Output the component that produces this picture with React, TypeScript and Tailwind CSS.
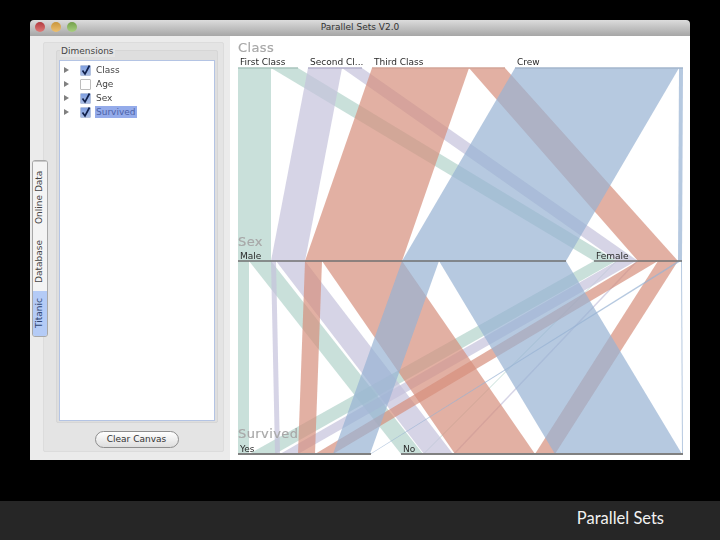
const GREEN = "#b2d3ca";
const PURPLE = "#c4c2db";
const RED = "#d68e7c";
const BLUE = "#97b2d3";

// [top-left, top-right, bottom-left, bottom-right, colour]
type Band = [number, number, number, number, string];

const classToSex: Band[] = [
  [238, 271, 238, 271, GREEN],
  [271, 298, 594, 617, GREEN],
  [308, 342, 271, 305, PURPLE],
  [342, 362, 617, 638, PURPLE],
  [372, 469, 305, 402, RED],
  [469, 505, 638, 678, RED],
  [515, 679, 402, 566, BLUE],
  [679, 683, 678, 682, BLUE],
];

const sexToSurvived: Band[] = [
  [238, 249, 238, 249, GREEN],
  [594, 616, 249, 275, GREEN],
  [249, 271, 401, 423, GREEN],
  [616, 617, 423, 424, GREEN],
  [271, 276, 275, 280, PURPLE],
  [617, 636, 280, 298, PURPLE],
  [276, 305, 424, 453, PURPLE],
  [636, 638, 453, 455, PURPLE],
  [305, 322, 298, 315, RED],
  [638, 658, 315, 333, RED],
  [322, 402, 455, 535, RED],
  [658, 678, 535, 555, RED],
  [402, 439, 333, 370, BLUE],
  [678, 681, 370, 371, BLUE],
  [439, 566, 555, 682, BLUE],
  [681, 682, 682, 683, BLUE],
];

const classAxes = [
  { from: 238, to: 298, label: "First Class", color: "#a9c4bd" },
  { from: 308, to: 362, label: "Second Cl...", color: "#b4b2cb" },
  { from: 372, to: 505, label: "Third Class", color: "#d3a497" },
  { from: 515, to: 683, label: "Crew", color: "#a3b6cd" },
];

function ribbons(bands: Band[], y1: number, y2: number) {
  return bands.map(([a, b, c, d, color]) => (
    <polygon
      key={`${y1}-${a}-${c}`}
      points={`${a},${y1} ${b},${y1} ${d},${y2} ${c},${y2}`}
      fill={color}
      fillOpacity={0.7}
    />
  ));
}

function Chart() {
  const labelClass = "fill-[#2a2a2a] text-[9px]";
  const titleClass = "fill-[#a8a8a8] stroke-[#a8a8a8] stroke-[0.2px] text-[13px] tracking-[0.4px]";
  return (
    <svg
      viewBox="230 36 460 424"
      className="w-[460px] h-[424px] font-['DejaVu_Sans',sans-serif]"
    >
      {ribbons(classToSex, 68, 261)}
      {ribbons(sexToSurvived, 261, 454)}

      {classAxes.map((a) => (
        <g key={a.label}>
          <line x1={a.from} x2={a.to} y1={68} y2={68} stroke={a.color} strokeWidth={1.5} />
          <text x={a.from + 2} y={65} className={labelClass}>
            {a.label}
          </text>
        </g>
      ))}

      <line x1={238} x2={566} y1={261} y2={261} stroke="#707070" strokeWidth={1.5} />
      <line x1={594} x2={682} y1={261} y2={261} stroke="#707070" strokeWidth={1.5} />
      <line x1={238} x2={371} y1={454} y2={454} stroke="#808080" strokeWidth={2} />
      <line x1={401} x2={683} y1={454} y2={454} stroke="#808080" strokeWidth={2} />

      <text x={238} y={52} className={titleClass}>Class</text>
      <text x={238} y={246} className={titleClass}>Sex</text>
      <text x={238} y={438} className={titleClass}>Survived</text>

      <text x={240} y={259} className={labelClass}>Male</text>
      <text x={596} y={259} className={labelClass}>Female</text>
      <text x={240} y={452} className={labelClass}>Yes</text>
      <text x={403} y={452} className={labelClass}>No</text>
    </svg>
  );
}

function TreeRow({ label, checked, selected }: { label: string; checked?: boolean; selected?: boolean }) {
  return (
    <div className="flex items-center h-[14px]">
      <span className="w-0 h-0 ml-[3px] border-y-[3.5px] border-y-transparent border-l-[5px] border-l-[#808080]" />
      <span
        className={
          checked
            ? "ml-[11px] w-[11px] h-[11px] flex items-center justify-center rounded-[1px] bg-gradient-to-b from-[#7f9fe0] to-[#a8bce4] border border-[#b4c2de]"
            : "ml-[11px] w-[11px] h-[11px] rounded-[1px] bg-white border border-[#bdbdbd]"
        }
      >
        {checked && (
          <svg viewBox="0 0 11 11" className="w-[11px] h-[11px] shrink-0">
            <path d="M2.5 5.5 L5 9 L9.5 0.5" fill="none" stroke="#10204a" strokeWidth={1.7} />
          </svg>
        )}
      </span>
      <span
        className={
          selected
            ? "ml-[4px] px-[1px] bg-[#94abea] text-[#4c62a8] leading-[12px]"
            : "ml-[5px] leading-[12px] text-[#444444]"
        }
      >
        {label}
      </span>
    </div>
  );
}

function Tabs() {
  const tabText = "[writing-mode:vertical-rl] rotate-180 flex items-center justify-center";
  return (
    <div className="self-center z-10 ml-[2px] -mr-[5px] w-[16px] h-[177px] flex flex-col rounded-[3px] border border-[#a8a8a8] overflow-hidden text-[9px] text-[#444444] shrink-0">
      <div className={`h-[71px] bg-[#f4f4f4] border-b border-[#c8c8c8] ${tabText}`}>Online Data</div>
      <div className={`h-[59px] bg-[#f4f4f4] ${tabText}`}>Database</div>
      <div className={`flex-1 bg-[#b4cbf6] text-[#2f4470] ${tabText}`}>Titanic</div>
    </div>
  );
}

function Sidebar() {
  return (
    <div className="w-[200px] shrink-0 flex bg-[#ebebeb] font-['DejaVu_Sans',sans-serif] text-[9px]">
      <Tabs />
      <div className="w-[181px] mt-[6px] mb-[8px] flex flex-col bg-[#e4e4e4] border border-[#dcdcdc] rounded-[2px] pl-[12px] pr-[5px]">
        <div className="relative mt-[7px] h-[373px] border border-[#d6d6d6] bg-[#dedede] rounded-[2px] px-[2px] pt-[9px] pb-[1px]">
          <span className="absolute left-[3px] -top-[5px] px-[1px] bg-[#e4e4e4] leading-[11px] text-[#444444]">
            Dimensions
          </span>
          <div className="h-full bg-white border border-[#b4c4e4] pt-[2px] pl-[1px]">
            <TreeRow label="Class" checked />
            <TreeRow label="Age" />
            <TreeRow label="Sex" checked />
            <TreeRow label="Survived" checked selected />
          </div>
        </div>
        <button className="self-center mt-[8px] -ml-[1px] w-[84px] h-[17px] rounded-full border border-[#8e8e8e] bg-gradient-to-b from-white to-[#dedede] text-[9px] leading-none text-[#333333]">
          Clear Canvas
        </button>
      </div>
    </div>
  );
}

export default function App() {
  return (
    <div className="w-[720px] h-[540px] bg-black flex flex-col overflow-hidden">
      <div className="ml-[30px] mt-[20px] w-[660px] h-[440px] flex flex-col rounded-t-[4px] overflow-hidden blur-[0.5px]">
        <div className="relative h-[16px] flex items-center justify-center bg-gradient-to-b from-[#dcdcdc] to-[#a6a6a6] font-['DejaVu_Sans',sans-serif] text-[9px] text-[#333333]">
          <div className="absolute left-[5px] top-[2px] flex gap-[6px]">
            <span className="w-[10px] h-[10px] rounded-full bg-gradient-to-b from-[#b23a40] to-[#e07a78]" />
            <span className="w-[10px] h-[10px] rounded-full bg-gradient-to-b from-[#c8963c] to-[#eec070]" />
            <span className="w-[10px] h-[10px] rounded-full bg-gradient-to-b from-[#74a04a] to-[#a8d080]" />
          </div>
          Parallel Sets V2.0
        </div>
        <div className="flex-1 flex bg-white">
          <Sidebar />
          <Chart />
        </div>
      </div>
      <div className="mt-auto h-[39px] bg-[#262626] flex items-center justify-end pr-[56px] pb-[5px] font-['Lato',sans-serif] text-[16.5px] text-[#f2f2f2]">
        Parallel Sets
      </div>
    </div>
  );
}
